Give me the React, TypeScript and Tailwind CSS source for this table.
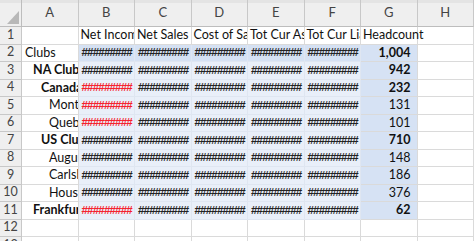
const cols = ["A", "B", "C", "D", "E", "F", "G", "H"];

type Row = {
  label: string;
  indent: number;
  bold?: boolean;
  red?: boolean;
  head: string;
  headBold?: boolean;
};

const rows: Row[] = [
  { label: "Clubs", indent: 0, head: "1,004", headBold: true },
  { label: "NA Clubs", indent: 1, bold: true, head: "942", headBold: true },
  { label: "Canada", indent: 2, bold: true, red: true, head: "232", headBold: true },
  { label: "Montreal", indent: 3, red: true, head: "131" },
  { label: "Quebec", indent: 3, red: true, head: "101" },
  { label: "US Clubs", indent: 2, bold: true, head: "710", headBold: true },
  { label: "Augusta", indent: 3, head: "148" },
  { label: "Carlsbad", indent: 3, head: "186" },
  { label: "Houston", indent: 3, head: "376" },
  { label: "Frankfurt", indent: 1, bold: true, red: true, head: "62", headBold: true },
];

const headers = ["Net Income", "Net Sales", "Cost of Sales", "Tot Cur Assets", "Tot Cur Liab"];

const indents = ["pl-[3px]", "pl-[11px]", "pl-[19px]", "pl-[27px]"];

const base = "h-[17.5px] border-r border-b border-[#dadada] whitespace-nowrap flex items-center text-[12.5px] leading-none";
const cell = `${base} overflow-hidden`;
const rowHead = "h-[17.5px] border-r border-b border-[#c8c8c8] bg-[#efefef] text-[#444] flex items-center justify-center text-[12.5px]";

const Hashes = ({ red }: { red?: boolean }) => (
  <span
    className={`${red ? "text-[#f5222d]" : "text-[#222]"} font-['Liberation_Sans',Arial,sans-serif] font-bold text-[11.5px] tracking-[-0.8px] pl-[3px]`}
  >
    #########
  </span>
);

export default function App() {
  return (
    <div className="w-[474px] h-[241px] overflow-hidden bg-white font-['Lato',Arial,sans-serif] text-[#111]">
      <div className="grid grid-cols-[22px_repeat(8,56.5px)]">
        {/* column header row */}
        <div className="relative h-[27px] bg-[#efefef] border-r border-b border-[#bdbdbd]">
          <div className="absolute inset-x-0 top-0 h-[3px] bg-[#e4e4e4]" />
          <svg className="absolute right-[2px] bottom-[2px]" width="12" height="13" viewBox="0 0 12 13">
            <polygon points="12,0 12,13 0,13" fill="#b8b8b8" />
          </svg>
        </div>
        {cols.map((c) => (
          <div
            key={c}
            className="relative h-[27px] bg-[#efefef] border-r border-b border-[#c8c8c8] border-b-[#bdbdbd] flex items-end justify-center pb-[4px] text-[13px] text-[#444]"
          >
            <div className="absolute inset-x-0 top-0 h-[3px] bg-[#e4e4e4]" />
            {c}
          </div>
        ))}

        {/* row 1 */}
        <div className={rowHead}>1</div>
        <div className={cell} />
        {headers.map((h) => (
          <div key={h} className={`${cell} pl-[2px]`}>
            {h}
          </div>
        ))}
        {/* G1 spills into the empty H1 */}
        <div className={`${base} overflow-visible pl-[2px] relative z-10`}>Headcount</div>
        <div className={cell} />

        {rows.map((r, i) => {
          const top = i === 0;
          const fill = top ? "bg-[#d5e1f3]" : "bg-[#e9eff9]";
          return [
            <div key={`n${i}`} className={rowHead}>
              {i + 2}
            </div>,
            <div key={`a${i}`} className={`${cell} ${indents[r.indent]} ${r.bold ? "font-bold" : ""}`}>
              {r.label}
            </div>,
            ...[0, 1, 2, 3, 4].map((k) => (
              <div key={`h${i}${k}`} className={`${cell} ${fill} border-[#dfe6f1]`}>
                <Hashes red={k === 0 && r.red} />
              </div>
            )),
            <div
              key={`g${i}`}
              className={`${cell} bg-[#d6e2f4] border-[#d6e2f4] justify-end pr-[6px] ${r.headBold ? "font-bold" : ""}`}
            >
              {r.head}
            </div>,
            <div key={`x${i}`} className={cell} />,
          ];
        })}

        {[12, 13].map((n) => [
          <div key={`n${n}`} className={rowHead}>
            {n}
          </div>,
          ...cols.map((c) => <div key={`${n}${c}`} className={cell} />),
        ])}
      </div>
    </div>
  );
}
